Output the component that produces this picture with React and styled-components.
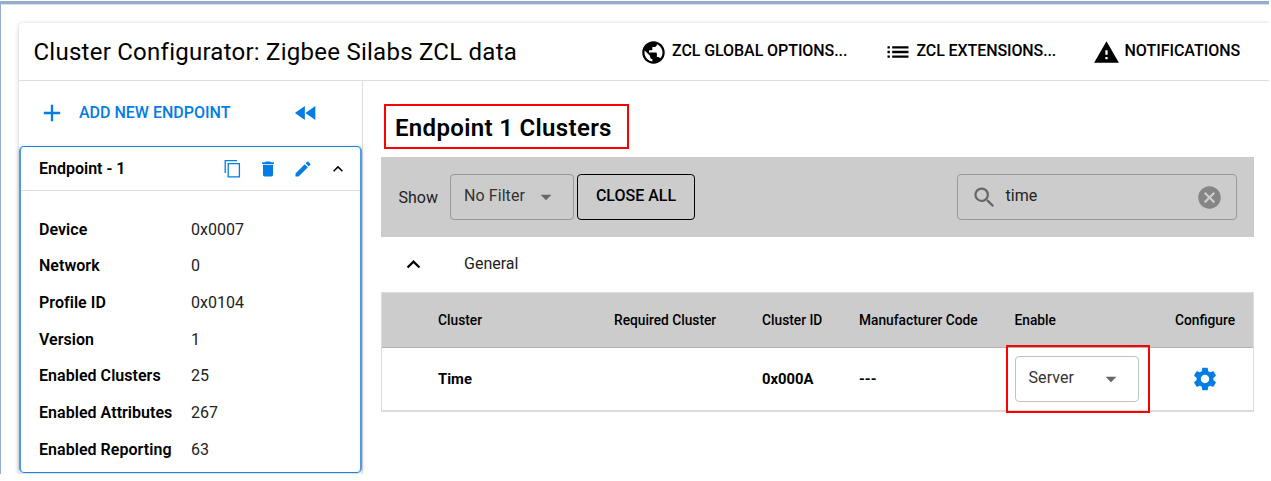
import React from "react";
import styled, { createGlobalStyle } from "styled-components";
import {
  MdPublic, MdList, MdWarning, MdAdd, MdFastRewind, MdDelete, MdEdit,
  MdExpandLess, MdArrowDropDown, MdSearch, MdCancel, MdSettings,
} from "react-icons/md";

const Global = createGlobalStyle`
  * { box-sizing: border-box; }
  body { margin: 0; background: #fff; color: #000; font-family: Roboto, "Liberation Sans", sans-serif; }
  svg { display: block; flex: none; }
`;

const Window = styled.div`
  width: 1269px;
  height: 473px;
  margin-top: 1px;
  padding: 18px 0 0 18px;
  overflow: hidden;
  border-left: 1px solid #93acd2;
  border-top: 3px solid #92aeca;
  box-shadow: inset 0 1px 0 #d5e1ed;
`;

const Card = styled.div`
  margin-top: 1px;
  width: 1270px;
  height: 451px;
  background: #fff;
  border-radius: 4px 0 0 4px;
  box-shadow: 0 1px 5px rgba(0, 0, 0, 0.2), 0 0 2px rgba(0, 0, 0, 0.06);
`;

const Header = styled.header`
  display: flex;
  align-items: center;
  height: 58px;
  padding-left: 14.5px;
  border-bottom: 1px solid #dedede;
`;

const Title = styled.h1`
  width: 606.5px;
  margin: 0;
  font-size: 24px;
  font-weight: 400;
  letter-spacing: 0.25px;
  white-space: nowrap;
`;

const MenuButton = styled.button`
  display: flex;
  align-items: center;
  gap: 5px;
  width: ${(p) => p.$width}px;
  padding: 0 0 3px;
  border: 0;
  background: none;
  color: #000;
  font: 500 16px Roboto, sans-serif;
  letter-spacing: ${(p) => p.$track}px;
  white-space: nowrap;
  svg { position: relative; top: 2px; }
`;

const Body = styled.div`
  display: flex;
  height: 393px;
`;

const Sidebar = styled.aside`
  width: 344px;
  border-right: 1px solid #dedede;
`;

const SideActions = styled.div`
  display: flex;
  align-items: center;
  height: 65px;
  padding: 0 0 1px 19px;
  color: #027de5;
`;

const AddLabel = styled.span`
  width: 226px;
  padding: 0 0 1px 13px;
  font-size: 16px;
  font-weight: 500;
`;

const EndpointCard = styled.section`
  width: 343px;
  height: 327px;
  border: 1px solid #1c83dc;
  border-left-width: 2px;
  border-right-width: 2px;
  border-radius: 5px;
  border-left-color: #4a9de6;
  border-right-color: #4a9de6;
  box-shadow: 0 1px 4px rgba(0, 0, 0, 0.2);
`;

const EndpointHeader = styled.div`
  display: flex;
  align-items: center;
  height: 44px;
  padding: 0 12px 0 18px;
  border-bottom: 1px solid #dedede;
  color: #027de5;
`;

const EndpointName = styled.span`
  flex: 1;
  color: #000;
  font-size: 16px;
  font-weight: 600;
`;

const IconRow = styled.div`
  display: flex;
  align-items: center;
  gap: 15px;
`;

const Details = styled.dl`
  display: grid;
  grid-template-columns: 152px 1fr;
  grid-auto-rows: 36.67px;
  align-items: center;
  margin: 0;
  padding: 20px 0 0 18px;
  font-size: 16px;
`;

const Term = styled.dt`
  font-weight: 600;
  letter-spacing: 0.04px;
  white-space: nowrap;
`;

const Value = styled.dd`
  margin: 0;
  color: #222;
`;

const Main = styled.main`
  width: 892px;
  padding: 23px 0 0 18px;
`;

const Heading = styled.h2`
  display: flex;
  align-items: center;
  width: 245px;
  height: 45px;
  margin: 0 0 8px 3px;
  padding: 2px 0 0 9px;
  border: 2px solid #ff0000;
  font-size: 24px;
  font-weight: 600;
  letter-spacing: 0.33px;
  white-space: nowrap;
`;

const Toolbar = styled.div`
  display: flex;
  align-items: center;
  width: 873px;
  height: 80px;
  padding: 0 17px;
  background: #ccc;
  font-size: 16px;
`;

const ShowLabel = styled.span`
  width: 52px;
  padding-left: 0.5px;
  color: #222;
`;

const Select = styled.div`
  display: flex;
  align-items: center;
  justify-content: space-between;
  width: 124px;
  height: 46px;
  padding: 0 14px 3px 13px;
  border: 1px solid ${(p) => p.$line};
  border-radius: 4px;
  color: #333;
  font-size: 16px;
  font-weight: 400;
  letter-spacing: 0.08px;
  svg { color: #666; position: relative; top: 1px; }
`;

const CloseAll = styled.button`
  width: 118px;
  height: 46px;
  margin: 0 auto 0 3px;
  padding: 0 0 3px;
  border: 1px solid #000;
  border-radius: 4px;
  background: none;
  color: #000;
  font: 500 16px Roboto, sans-serif;
`;

const Search = styled.div`
  display: flex;
  align-items: center;
  width: 280px;
  height: 46px;
  padding: 0 13px;
  border: 1px solid #999;
  border-radius: 4px;
  color: #666;
`;

const Query = styled.span`
  flex: 1;
  padding: 0 0 3px 7.5px;
  color: #222;
`;

const Group = styled.div`
  display: flex;
  align-items: center;
  height: 55px;
  padding: 0 0 2px 19px;
  gap: 37px;
  color: #222;
  font-size: 16px;
  svg { color: #000; position: relative; top: 1px; }
`;

const Table = styled.div`
  position: relative;
  width: 873px;
  height: 120px;
  border: 1px solid #dcdcdc;
  border-bottom-width: 2px;
`;

const Row = styled.div`
  display: grid;
  grid-template-columns: 176px 148px 97px 155.5px 160.5px 1fr;
  align-items: center;
  height: ${(p) => (p.$head ? 55 : 62)}px;
  padding-left: 56px;
  background: ${(p) => (p.$head ? "#ccc" : "#fff")};
  border-bottom: ${(p) => (p.$head ? "1px solid #b3b3b3" : "0")};
  font-size: ${(p) => (p.$head ? 13.75 : 14.8)}px;
  font-weight: ${(p) => (p.$head ? 500 : 700)};
  white-space: nowrap;
`;

const Configure = styled.span`
  padding-left: 16px;
  color: #027de5;
`;

const Highlight = styled.div`
  position: absolute;
  left: 624px;
  top: 52px;
  width: 144px;
  height: 68px;
  border: 2px solid #ff0000;
`;

const ThinCopyIcon = () => (
  <svg width="20" height="20" viewBox="0 0 20 20" fill="none" stroke="currentColor" strokeWidth="1.3">
    <path d="M2.2 14V1.7H14" />
    <path d="M5.2 4.7h11.2v13.2H5.2z" />
  </svg>
);

const details = [
  ["Device", "0x0007"],
  ["Network", "0"],
  ["Profile ID", "0x0104"],
  ["Version", "1"],
  ["Enabled Clusters", "25"],
  ["Enabled Attributes", "267"],
  ["Enabled Reporting", "63"],
];

export default function App() {
  return (
    <Window>
      <Global />
      <Card>
        <Header>
          <Title>Cluster Configurator: Zigbee Silabs ZCL data</Title>
          <MenuButton $width={243.5} $track={-0.07}><MdPublic size={27} />ZCL GLOBAL OPTIONS...</MenuButton>
          <MenuButton $width={209} $track={-0.1}><MdList size={28} />ZCL EXTENSIONS...</MenuButton>
          <MenuButton $width={160} $track={-0.03}><MdWarning size={27} />NOTIFICATIONS</MenuButton>
        </Header>
        <Body>
          <Sidebar>
            <SideActions>
              <MdAdd size={28} />
              <AddLabel>ADD NEW ENDPOINT</AddLabel>
              <MdFastRewind size={28} />
            </SideActions>
            <EndpointCard>
              <EndpointHeader>
                <EndpointName>Endpoint - 1</EndpointName>
                <IconRow>
                  <ThinCopyIcon />
                  <MdDelete size={20} />
                  <MdEdit size={20} />
                  <MdExpandLess size={20} color="#000" />
                </IconRow>
              </EndpointHeader>
              <Details>
                {details.map(([name, value]) => (
                  <React.Fragment key={name}>
                    <Term>{name}</Term>
                    <Value>{value}</Value>
                  </React.Fragment>
                ))}
              </Details>
            </EndpointCard>
          </Sidebar>
          <Main>
            <Heading>Endpoint 1 Clusters</Heading>
            <Toolbar>
              <ShowLabel>Show</ShowLabel>
              <Select $line="#999">No Filter<MdArrowDropDown size={26} /></Select>
              <CloseAll>CLOSE ALL</CloseAll>
              <Search>
                <MdSearch size={27} />
                <Query>time</Query>
                <MdCancel size={27} color="#858585" />
              </Search>
            </Toolbar>
            <Group><MdExpandLess size={27} />General</Group>
            <Table>
              <Row $head>
                <span>Cluster</span>
                <span>Required Cluster</span>
                <span>Cluster ID</span>
                <span>Manufacturer Code</span>
                <span>Enable</span>
                <span>Configure</span>
              </Row>
              <Row>
                <span>Time</span>
                <span />
                <span>0x000A</span>
                <span>---</span>
                <Select $line="#c2c2c2">Server<MdArrowDropDown size={26} /></Select>
                <Configure><MdSettings size={28} /></Configure>
              </Row>
              <Highlight />
            </Table>
          </Main>
        </Body>
      </Card>
    </Window>
  );
}
